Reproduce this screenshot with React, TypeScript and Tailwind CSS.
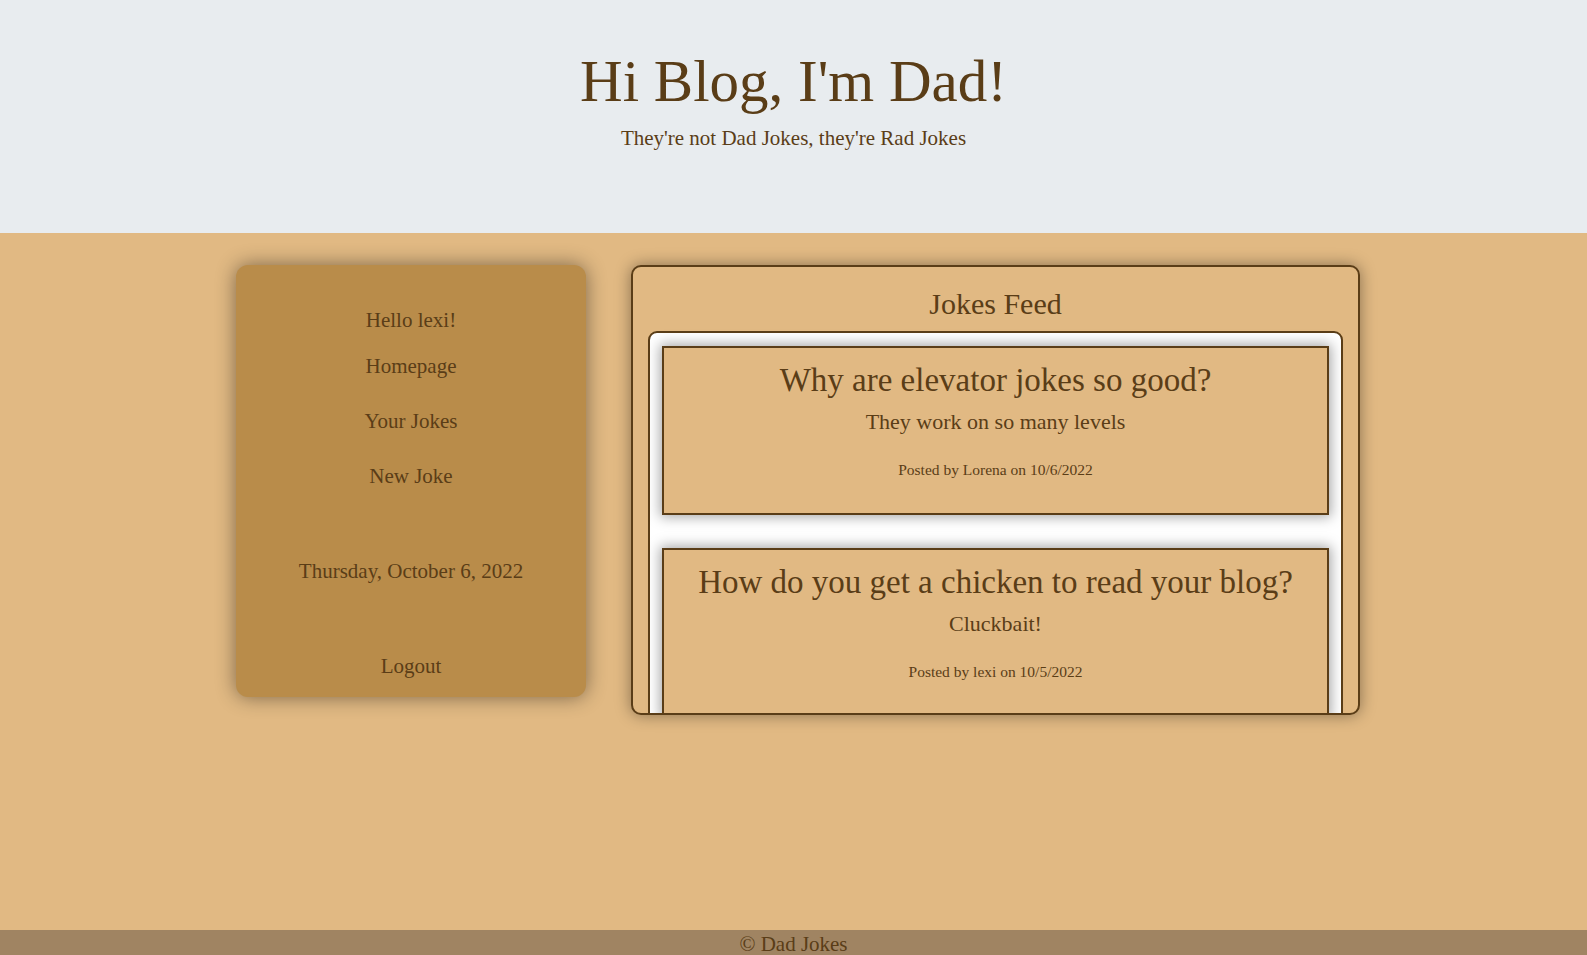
const jokes = [
  {
    question: "Why are elevator jokes so good?",
    punchline: "They work on so many levels",
    author: "Lorena",
    date: "10/6/2022",
  },
  {
    question: "How do you get a chicken to read your blog?",
    punchline: "Cluckbait!",
    author: "lexi",
    date: "10/5/2022",
  },
];

const navLinks = ["Homepage", "Your Jokes", "New Joke"];

export default function App() {
  return (
    <div className="flex flex-col w-full h-[955px] overflow-hidden font-['Liberation_Serif',serif] text-[#5a3d17]">
      {/* Header */}
      <header className="h-[233px] bg-[#e8ecef] flex flex-col items-center pt-[46px]">
        <h1 className="text-[59px] leading-[70px]">Hi Blog, I'm Dad!</h1>
        <p className="text-[21px] leading-[28px] mt-[8px]">They're not Dad Jokes, they're Rad Jokes</p>
      </header>

      {/* Main */}
      <main className="h-[697px] bg-[#e1b983] flex items-start pl-[236px] pt-[32px] gap-[45px]">
        {/* Sidebar */}
        <aside className="w-[350px] h-[432px] bg-[#b98c4a] rounded-[12px] shadow-[0_0_20px_rgba(0,0,0,0.45)] flex flex-col items-center pt-[41px] text-[21px] leading-[28px]">
          <p>Hello lexi!</p>
          <nav className="flex flex-col items-center gap-[27px] mt-[18px]">
            {navLinks.map((link) => (
              <a key={link} href="#" className="block">
                {link}
              </a>
            ))}
          </nav>
          <p className="mt-[67px]">Thursday, October 6, 2022</p>
          <a href="#" className="block mt-[67px]">
            Logout
          </a>
        </aside>

        {/* Feed */}
        <section className="w-[729px] h-[450px] border-2 border-[#5a3d17] rounded-[10px] bg-[#e1b983] shadow-[0_0_16px_rgba(0,0,0,0.4)] overflow-hidden flex flex-col items-center pt-[19px]">
          <h2 className="text-[30px] leading-[36px]">Jokes Feed</h2>
          <div className="w-[695px] mt-[9px] shrink-0 bg-white border-2 border-[#5a3d17] rounded-t-[9px] px-[12px] pt-[13px] pb-[13px] flex flex-col gap-[33px]">
            {jokes.map((joke) => (
              <article
                key={joke.question}
                className="h-[169px] border-2 border-[#5a3d17] bg-[#e1b983] shadow-[0_0_12px_2px_rgba(0,0,0,0.35)] flex flex-col items-center pt-[12px]"
              >
                <h3 className="text-[33px] leading-[40px]">{joke.question}</h3>
                <p className="text-[22px] leading-[30px] mt-[7px]">{joke.punchline}</p>
                <p className="text-[15.5px] leading-[20px] mt-[23px]">
                  Posted by {joke.author} on {joke.date}
                </p>
              </article>
            ))}
          </div>
        </section>
      </main>

      {/* Footer */}
      <footer className="h-[25px] bg-[#a08462] flex justify-center overflow-hidden">
        <p className="text-[21px] leading-[28px]">© Dad Jokes</p>
      </footer>
    </div>
  );
}
